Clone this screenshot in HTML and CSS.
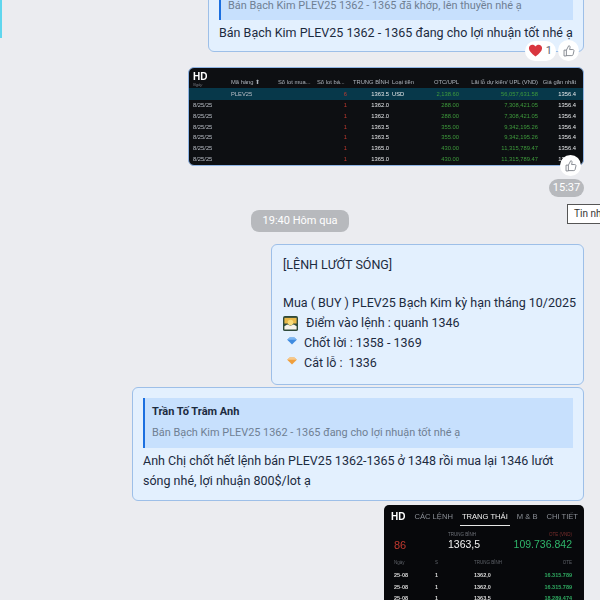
FILE: index.html
```html
<!DOCTYPE html>
<html lang="vi">
<head>
    <meta charset="UTF-8">
    <title>Tin nhắn</title>
    <link rel="stylesheet" href="styles.css">
</head>
<body>
    <div class="side-strip"></div>
    <div class="thread">

        <!-- Tin nhan tra loi, bi cat o tren -->
        <div class="bubble bubble-first">
            <div class="quote quote-first">
                <p class="quote-text">Bán Bạch Kim PLEV25 1362 - 1365 đã khớp, lên thuyền nhé ạ</p>
            </div>
            <p class="msg-text">Bán Bạch Kim PLEV25 1362 - 1365 đang cho lợi nhuận tốt nhé ạ</p>
            <div class="reactions">
                <span class="react-pill">
                    <svg class="heart" viewBox="0 0 24 24"><path d="M12 21.500C5 16 1.500 12.400 1.500 8.200 1.500 5 4 2.800 6.900 2.800c2 0 3.900 1 5.100 2.900 1.200-1.900 3.100-2.900 5.100-2.900 2.900 0 5.400 2.200 5.400 5.400 0 4.200-3.500 7.800-10.500 13.300z" fill="#d9363f"/></svg>
                    1
                </span>
                <span class="like-btn">
                    <svg viewBox="0 0 24 24"><path d="M7.500 10.500v10M7.500 10.500l4-7.500c1.700 0 2.700 1.200 2.300 2.900l-.8 3.600h5.600c1.300 0 2.200 1.200 1.900 2.400l-1.500 6.300c-.2 1-1.100 1.700-2.100 1.700H7.500M7.500 10.500H3.500v10h4" fill="none" stroke="#7a7f87" stroke-width="1.500" stroke-linejoin="round"/></svg>
                </span>
            </div>
        </div>

        <!-- Screenshot bang lenh desktop -->
        <div class="shot-wrap">
            <div class="shot-desk">
                <div class="desk-row desk-head">
                    <span class="hd-cell"><b class="hd-logo">HD</b><i>Ngày</i></span>
                    <span>Mã hàng ⬆</span><span>Số lot mua...</span><span>Số lot bá...</span>
                    <span class="num">TRUNG BÌNH</span><span class="cur">Loại tiền</span><span class="num">OTC/UPL</span>
                    <span class="num">Lãi lỗ dự kiến/ UPL (VND)</span><span class="num">Giá gần nhất</span>
                </div>
                <div class="desk-row desk-total">
                    <span></span><span>PLEV25</span><span></span><span class="num red">6</span>
                    <span class="num white">1363.5</span><span class="cur white">USD</span><span class="num green">2,138.60</span>
                    <span class="num green">56,057,631.58</span><span class="num white">1356.4</span>
                </div>
                <div class="desk-row"><span>8/25/25</span><span></span><span></span><span class="num red">1</span><span class="num white">1362.0</span><span></span><span class="num green">288.00</span><span class="num green">7,308,421.05</span><span class="num white">1356.4</span></div>
                <div class="desk-row"><span>8/25/25</span><span></span><span></span><span class="num red">1</span><span class="num white">1362.0</span><span></span><span class="num green">288.00</span><span class="num green">7,308,421.05</span><span class="num white">1356.4</span></div>
                <div class="desk-row"><span>8/25/25</span><span></span><span></span><span class="num red">1</span><span class="num white">1363.5</span><span></span><span class="num green">355.00</span><span class="num green">9,342,195.26</span><span class="num white">1356.4</span></div>
                <div class="desk-row"><span>8/25/25</span><span></span><span></span><span class="num red">1</span><span class="num white">1363.5</span><span></span><span class="num green">355.00</span><span class="num green">9,342,195.26</span><span class="num white">1356.4</span></div>
                <div class="desk-row"><span>8/25/25</span><span></span><span></span><span class="num red">1</span><span class="num white">1365.0</span><span></span><span class="num green">430.00</span><span class="num green">11,315,789.47</span><span class="num white">1356.4</span></div>
                <div class="desk-row"><span>8/25/25</span><span></span><span></span><span class="num red">1</span><span class="num white">1365.0</span><span></span><span class="num green">430.00</span><span class="num green">11,315,789.47</span><span class="num white">1356.4</span></div>
            </div>
            <span class="like-btn like-shot">
                <svg viewBox="0 0 24 24"><path d="M7.500 10.500v10M7.500 10.500l4-7.500c1.700 0 2.700 1.200 2.300 2.900l-.8 3.600h5.600c1.300 0 2.200 1.200 1.900 2.400l-1.500 6.300c-.2 1-1.100 1.700-2.100 1.700H7.500M7.500 10.500H3.500v10h4" fill="none" stroke="#7a7f87" stroke-width="1.500" stroke-linejoin="round"/></svg>
            </span>
        </div>

        <div class="time-wrap">
            <span class="pill pill-time">15:37</span>
            <span class="tooltip">Tin nhắn đã gửi</span>
        </div>

        <span class="pill pill-date">19:40 Hôm qua</span>

        <!-- Lenh luot song -->
        <div class="bubble bubble-order">
            <p class="msg-text">[LỆNH LƯỚT SÓNG]</p>
            <p class="msg-text blank">&nbsp;</p>
            <p class="msg-text">Mua ( BUY ) PLEV25 Bạch Kim kỳ hạn tháng 10/2025</p>
            <p class="msg-text icon-line">
                <svg class="ico-sun" viewBox="0 0 16 16">
                    <rect width="16" height="16" rx="2" fill="#2f4a3a"/>
                    <rect x="1.500" y="2" width="13" height="6" fill="#e9b949"/>
                    <circle cx="8" cy="7" r="3" fill="#f8dc7a"/>
                    <path d="M1.500 14.500V11l3-2 3.500 1.500L11.500 9l3 2v3.500z" fill="#f6f3ea"/>
                </svg>
                Điểm vào lệnh : quanh 1346
            </p>
            <p class="msg-text icon-line icon-line-gem">
                <svg class="ico-gem" viewBox="0 0 12 10"><path d="M3 0.500h6L12 3.500 6 9.500 0 3.500z" fill="#3f8be0"/><path d="M3 0.500h6L12 3.500H0z" fill="#7db6f2"/></svg>
                Chốt lời : 1358 - 1369
            </p>
            <p class="msg-text icon-line icon-line-gem">
                <svg class="ico-gem" viewBox="0 0 12 10"><path d="M3 0.500h6L12 3.500 6 9.500 0 3.500z" fill="#ef9f3c"/><path d="M3 0.500h6L12 3.500H0z" fill="#f8c98a"/></svg>
                Cắt lỗ :&nbsp; 1336
            </p>
        </div>

        <!-- Tra loi Tran To Tram Anh -->
        <div class="bubble bubble-reply">
            <div class="quote">
                <p class="quote-name">Trần Tố Trâm Anh</p>
                <p class="quote-text">Bán Bạch Kim PLEV25 1362 - 1365 đang cho lợi nhuận tốt nhé ạ</p>
            </div>
            <p class="msg-text">Anh Chị chốt hết lệnh bán PLEV25 1362-1365 ở 1348 rồi mua lại 1346 lướt sóng nhé, lợi nhuận 800$/lot ạ</p>
        </div>

        <!-- Screenshot app dien thoai -->
        <div class="shot-phone">
            <div class="phone-tabs">
                <b class="tab-hd">HD</b>
                <span>CÁC LỆNH</span>
                <span class="tab-on">TRẠNG THÁI</span>
                <span>M &amp; B</span>
                <span>CHI TIẾT</span>
            </div>
            <div class="phone-sum">
                <span class="sum-lot">86</span>
                <div class="sum-col sum-mid"><small>TRUNG BÌNH</small><span>1363,5</span></div>
                <div class="sum-col sum-right"><small>OTE (VND)</small><span>109.736.842</span></div>
            </div>
            <div class="phone-row phone-head"><span>Ngày</span><span>S</span><span class="mid">TRUNG BÌNH</span><span class="num">OTE</span></div>
            <div class="phone-row"><span>25-08</span><span>1</span><span class="mid">1362,0</span><span class="num green">16.315.789</span></div>
            <div class="phone-row"><span>25-08</span><span>1</span><span class="mid">1362,0</span><span class="num green">16.315.789</span></div>
            <div class="phone-row"><span>25-08</span><span>1</span><span class="mid">1363,5</span><span class="num green">18.289.474</span></div>
        </div>
    </div>
</body>
</html>
```

FILE: styles.css
```css
html, body {
    height: 100%;
}
body {
    margin: 0;
    background-color: #ebecf0; /* achtergrond chat */
    font-family: Roboto, "Noto Sans", sans-serif;
    color: #1c2b3f;
    overflow: hidden;
}
p {
    margin: 0;
}
.side-strip {
    position: absolute;
    left: 0;
    top: 0;
    width: 2px;
    height: 38px;
    background-color: #5fd6ee;
}
.thread {
    height: 600px;
    padding: 0 16px;
    display: flex;
    flex-direction: column;
    align-items: flex-end;
}
.bubble {
    box-sizing: border-box;
    background-color: #e3f0fe;
    border: 1px solid #9dbfe8;
    border-radius: 6px;
}
.msg-text {
    font-size: 12.500px;
    line-height: 20px;
    color: #1c2b3f;
}
.bubble-first .msg-text,
.bubble-order .msg-text {
    white-space: nowrap;
}
.bubble-first {
    position: relative;
    width: 376px;
    height: 72px;
    flex-shrink: 0;
    margin-top: -20px;
    padding: 0 10px;
}
.quote {
    background-color: #c7e0fd;
    border-left: 2px solid #1b6fe0;
    padding: 6px 7px;
    margin-bottom: 3px;
}
.quote-first {
    height: 39px;
    box-sizing: border-box;
    padding-top: 17px;
    margin-bottom: 3px;
}
.quote-name {
    font-size: 11px;
    font-weight: 700;
    line-height: 16px;
    margin-bottom: 5px;
}
.quote-text {
    font-size: 10.900px;
    line-height: 16px;
    color: #6f7f93;
    white-space: nowrap;
}
.reactions {
    position: absolute;
    right: 4px;
    bottom: -10px;
    display: flex;
    align-items: center;
    gap: 2px;
}
.react-pill {
    height: 20px;
    padding: 0 4px 0 3px;
    background-color: #ffffff;
    border-radius: 10px;
    display: flex;
    align-items: center;
    gap: 3px;
    font-size: 11px;
    color: #5c6570;
}
.heart {
    width: 15px;
    height: 15px;
}
.like-btn {
    width: 21px;
    height: 21px;
    background-color: #ffffff;
    border-radius: 50%;
    display: flex;
    align-items: center;
    justify-content: center;
}
.like-btn svg {
    width: 14px;
    height: 14px;
}

/* screenshot desktop */
.shot-wrap {
    position: relative;
    margin-top: 15px;
}
.shot-desk {
    box-sizing: border-box;
    width: 396px;
    height: 99px;
    overflow: hidden;
    background-color: #0d0f12;
    border: 1px solid #8fb4e4;
    border-radius: 6px;
    font-family: "Liberation Sans", Arial, sans-serif;
    font-size: 5.800px;
    color: #b9bec6;
    filter: blur(0.3px);
}
.desk-row {
    display: grid;
    grid-template-columns: 38px 47px 39px 30px 42px 31px 39px 79px 38px;
    height: 10.800px;
    line-height: 10.800px;
    padding-left: 4px;
    white-space: nowrap;
}
.desk-head {
    height: 20px;
    line-height: 28px;
    color: #aeb4bc;
}
.desk-total {
    height: 12px;
    line-height: 12px;
    background-color: #07384a;
}
.cur {
    padding-left: 3px;
}
.hd-cell {
    line-height: 1;
    padding-top: 4px;
}
.hd-logo {
    display: block;
    font-size: 10px;
    color: #ffffff;
}
.hd-cell i {
    font-size: 4px;
    color: #777c85;
}
.num {
    text-align: right;
}
.white {
    color: #e6e8ea;
}
.red {
    color: #c0392f;
}
.green {
    color: #3e9a3c;
}
.like-shot {
    position: absolute;
    right: 3px;
    bottom: -10px;
}

/* pills */
.time-wrap {
    position: relative;
    margin-top: 13px;
}
.pill {
    display: block;
    background-color: #b7b9bd;
    color: #ffffff;
    font-size: 11px;
}
.pill-time {
    width: 35px;
    height: 18px;
    line-height: 18px;
    text-align: center;
    border-radius: 9px;
}
.tooltip {
    position: absolute;
    left: 18px;
    top: 25px;
    width: 70px;
    height: 20px;
    box-sizing: border-box;
    padding-left: 6px;
    line-height: 18px;
    font-size: 10px;
    white-space: nowrap;
    color: #333333;
    background-color: #ffffff;
    border: 1px solid #555555;
}
.pill-date {
    align-self: center;
    margin-top: 13px;
    width: 98px;
    height: 22px;
    line-height: 22px;
    text-align: center;
    border-radius: 8px;
}

/* berichten */
.bubble-order {
    width: 313px;
    height: 141px;
    flex-shrink: 0;
    margin-top: 12px;
    padding: 10px 10px 0 11px;
}
.blank {
    height: 18px;
    line-height: 18px;
}
.icon-line {
    display: flex;
    align-items: center;
    gap: 8px;
}
.icon-line-gem {
    gap: 7px;
    padding-left: 4px;
}
.ico-sun {
    width: 15px;
    height: 15px;
}
.ico-gem {
    width: 10px;
    height: 8px;
    margin-top: -5px;
}
.bubble-reply {
    width: 452px;
    height: 114px;
    flex-shrink: 0;
    margin-top: 2px;
    padding: 10px 10px 0 10px;
}
.bubble-reply .quote {
    height: 50px;
    box-sizing: border-box;
    padding: 6px 7px;
    margin-bottom: 3px;
}

/* screenshot telefoon */
.shot-phone {
    box-sizing: border-box;
    width: 200px;
    height: 100px;
    margin-top: 4px;
    padding: 0 5px;
    flex-shrink: 0;
    background-color: #07080b;
    border-radius: 5px 5px 0 0;
    font-family: "Liberation Sans", Arial, sans-serif;
    color: #8b8f96;
    filter: blur(0.25px);
}
.phone-tabs {
    display: flex;
    align-items: center;
    justify-content: space-between;
    height: 20px;
    padding: 1px 1px 0 2px;
    font-size: 7.600px;
    white-space: nowrap;
}
.tab-hd {
    font-size: 10px;
    color: #ffffff;
}
.tab-on {
    color: #f1f1f1;
    position: relative;
}
.tab-on::after {
    content: "";
    position: absolute;
    left: -2px;
    right: -2px;
    top: 13px;
    height: 1px;
    background-color: #e6e6e6;
}
.phone-sum {
    display: grid;
    grid-template-columns: 59px 60px 1fr;
    align-items: end;
    height: 25px;
    margin-bottom: 5px;
}
.sum-lot {
    font-size: 11px;
    color: #c0392f;
    padding-left: 5px;
}
.sum-col {
    display: flex;
    flex-direction: column;
}
.sum-col small {
    font-size: 4.500px;
    line-height: 7px;
    color: #6f737a;
}
.sum-mid span {
    font-size: 10.500px;
    line-height: 13px;
    color: #f1f1f1;
}
.sum-right {
    text-align: right;
    padding-right: 7px;
}
.sum-right small {
    color: #7a2f2d;
}
.sum-right span {
    font-size: 10.500px;
    line-height: 13px;
    color: #2fb56a;
}
.phone-row {
    display: grid;
    grid-template-columns: 41px 39px 50px 1fr;
    height: 11.500px;
    line-height: 11.500px;
    padding: 0 7px 0 5px;
    font-size: 5.500px;
    font-weight: 700;
    color: #d9d9d9;
}
.phone-head {
    height: 14px;
    line-height: 14px;
    font-size: 4.500px;
    font-weight: 400;
    color: #5f636a;
}
.phone-row .green {
    color: #2fa860;
}
```
